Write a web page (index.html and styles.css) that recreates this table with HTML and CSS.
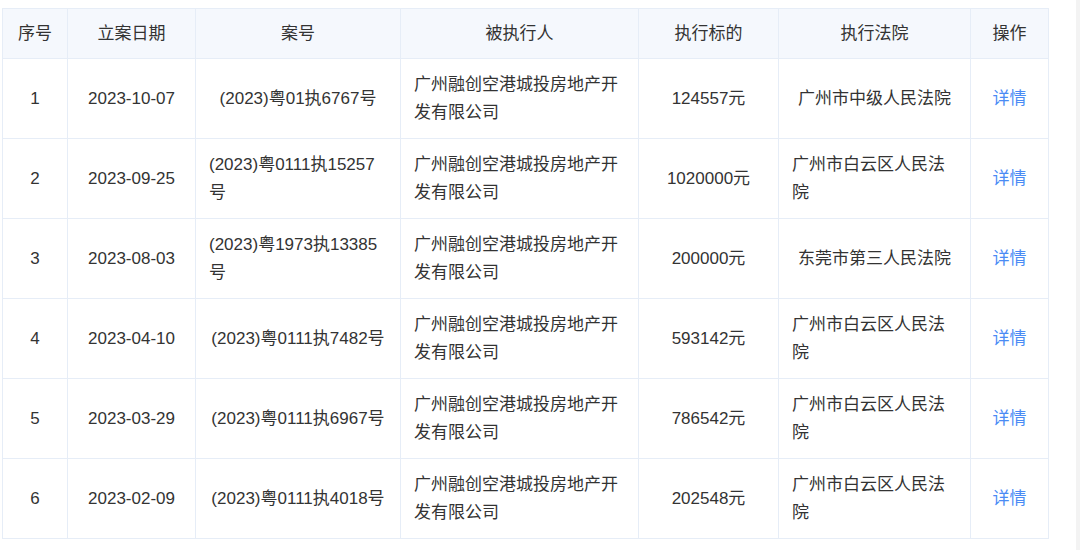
FILE: index.html
```html
<!DOCTYPE html>
<html lang="zh-CN">
<head>
<meta charset="utf-8">
<title>执行信息</title>
<link rel="stylesheet" href="styles.css">
</head>
<body>
<div class="page">
  <table class="grid">
    <colgroup>
      <col class="c1"><col class="c2"><col class="c3"><col class="c4"><col class="c5"><col class="c6"><col class="c7">
    </colgroup>
    <thead>
      <tr><th>序号</th><th>立案日期</th><th>案号</th><th>被执行人</th><th>执行标的</th><th>执行法院</th><th>操作</th></tr>
    </thead>
    <tbody>
      <tr><td><span class="cell">1</span></td><td><span class="cell">2023-10-07</span></td><td><span class="cell">(2023)粤01执6767号</span></td><td><span class="cell">广州融创空港城投房地产开发有限公司</span></td><td><span class="cell">124557元</span></td><td><span class="cell">广州市中级人民法院</span></td><td><a class="link">详情</a></td></tr>
      <tr><td><span class="cell">2</span></td><td><span class="cell">2023-09-25</span></td><td><span class="cell">(2023)粤0111执15257号</span></td><td><span class="cell">广州融创空港城投房地产开发有限公司</span></td><td><span class="cell">1020000元</span></td><td><span class="cell">广州市白云区人民法院</span></td><td><a class="link">详情</a></td></tr>
      <tr><td><span class="cell">3</span></td><td><span class="cell">2023-08-03</span></td><td><span class="cell">(2023)粤1973执13385号</span></td><td><span class="cell">广州融创空港城投房地产开发有限公司</span></td><td><span class="cell">200000元</span></td><td><span class="cell">东莞市第三人民法院</span></td><td><a class="link">详情</a></td></tr>
      <tr><td><span class="cell">4</span></td><td><span class="cell">2023-04-10</span></td><td><span class="cell">(2023)粤0111执7482号</span></td><td><span class="cell">广州融创空港城投房地产开发有限公司</span></td><td><span class="cell">593142元</span></td><td><span class="cell">广州市白云区人民法院</span></td><td><a class="link">详情</a></td></tr>
      <tr><td><span class="cell">5</span></td><td><span class="cell">2023-03-29</span></td><td><span class="cell">(2023)粤0111执6967号</span></td><td><span class="cell">广州融创空港城投房地产开发有限公司</span></td><td><span class="cell">786542元</span></td><td><span class="cell">广州市白云区人民法院</span></td><td><a class="link">详情</a></td></tr>
      <tr><td><span class="cell">6</span></td><td><span class="cell">2023-02-09</span></td><td><span class="cell">(2023)粤0111执4018号</span></td><td><span class="cell">广州融创空港城投房地产开发有限公司</span></td><td><span class="cell">202548元</span></td><td><span class="cell">广州市白云区人民法院</span></td><td><a class="link">详情</a></td></tr>
    </tbody>
  </table>
  <div class="track"></div>
</div>
</body>
</html>
```

FILE: styles.css
```css
html, body {
  margin: 0;
  padding: 0;
  background: #ffffff;
}
body {
  font-family: "Liberation Sans", "Noto Sans CJK SC", sans-serif;
  font-size: 17px;
  color: #333333;
}
.page {
  display: flex;
  height: 550px;
  padding-left: 2px;
  box-sizing: border-box;
}
.grid {
  margin-top: 8px;
  align-self: flex-start;
  border-collapse: collapse;
  table-layout: fixed;
  width: 1046px;
}
.c1 { width: 65px; }
.c2 { width: 128px; }
.c3 { width: 205px; }
.c4 { width: 238px; }
.c5 { width: 140px; }
.c6 { width: 192px; }
.c7 { width: 78px; }
.grid th,
.grid td {
  border: 1px solid #e6edf7;
  text-align: center;
  vertical-align: middle;
  padding: 0 13px;
  line-height: 28px;
}
.grid th {
  height: 49px;
  background: #f5f8fd;
  font-weight: normal;
  color: #333333;
}
.grid td {
  height: 79px;
}
.cell {
  display: inline-block;
  text-align: left;
  word-break: break-all;
}
.link {
  color: #4a8bf5;
  cursor: pointer;
}
.track {
  margin-left: auto;
  width: 4px;
  height: 550px;
  background: #f3f3f3;
}
```
